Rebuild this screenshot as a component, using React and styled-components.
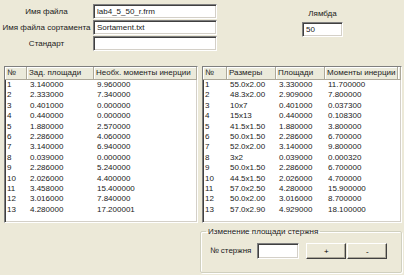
import React from "react";
import styled, { createGlobalStyle } from "styled-components";

const Global = createGlobalStyle`
  html, body { margin: 0; padding: 0; background: #ECE9D8; }
  body { font-family: "Liberation Sans", Arial, sans-serif; font-size: 8px; color: #000; }
`;

const Window = styled.div`
  width: 404px;
  height: 275px;
  background: #ECE9D8;
  overflow: hidden;
  display: flex;
  flex-direction: column;
`;

const Top = styled.div`
  display: flex;
  height: 66px;
  padding-top: 4px;
  box-sizing: border-box;
`;

const FormGrid = styled.div`
  display: grid;
  grid-template-columns: 93px 124px;
  grid-auto-rows: 15px;
  row-gap: 1px;
  align-items: center;
`;

const Label = styled.div`
  text-align: center;
  white-space: nowrap;
  line-height: 15px;
  color: #1a1a1a;
`;

const sunken = `
  box-sizing: border-box;
  background: #fff;
  border-style: solid;
  border-width: 1px;
  border-color: #7F7F7F #FFFFFF #FFFFFF #7F7F7F;
  box-shadow: inset 1px 1px 0 #404040, inset -1px -1px 0 #D4D0C8;
`;

const Input = styled.div`
  ${sunken}
  height: ${(p) => p.$h || 15}px;
  width: ${(p) => (p.$w ? p.$w + "px" : "auto")};
  padding: 0 3px;
  line-height: ${(p) => (p.$h || 15) - 2}px;
  white-space: nowrap;
  overflow: hidden;
  color: #1a1a1a;
`;

const LambdaBlock = styled.div`
  margin-left: 85px;
  display: flex;
  flex-direction: column;
  align-items: center;
  width: 41px;
`;

const LambdaLabel = styled.div`
  line-height: 15px;
  height: 18px;
  padding-top: 2px;
  box-sizing: border-box;
  color: #1a1a1a;
`;

const Lists = styled.div`
  display: flex;
  height: 157px;
  padding-left: 4px;
  gap: 4px;
`;

const List = styled.div`
  ${sunken}
  width: ${(p) => p.$w}px;
  height: 100%;
  overflow: hidden;
`;

const Grid = styled.div`
  display: grid;
  grid-template-columns: ${(p) => p.$cols};
`;

const Head = styled.div`
  height: 12px;
  line-height: 12px;
  padding-left: 2px;
  background: #EBEADB;
  border-right: 1px solid #ACA899;
  border-bottom: 1px solid #ACA899;
  box-shadow: inset 1px 1px 0 #FFFFFF;
  white-space: nowrap;
  overflow: hidden;
  color: #222;
`;

const Cell = styled.div`
  height: 10.4px;
  line-height: 10.4px;
  padding-left: ${(p) => p.$pad ?? 3}px;
  white-space: nowrap;
  color: #1a1a1a;
`;

const Bottom = styled.div`
  display: flex;
  justify-content: flex-end;
  padding: 4px 2px 0 0;
`;

const GroupBox = styled.fieldset`
  box-sizing: border-box;
  margin: 0;
  width: 202px;
  height: 46px;
  padding: 7px 0 0 9px;
  border: 1px solid #D0D0BF;
  box-shadow: 1px 1px 0 #FFFFFF, inset 1px 1px 0 #FFFFFF;
  border-radius: 2px;
  display: flex;
  align-items: flex-start;
`;

const Legend = styled.legend`
  padding: 0 2px;
  margin-left: -4px;
  color: #222;
  line-height: 9px;
`;

const RowLabel = styled.span`
  margin-right: 6px;
  white-space: nowrap;
  line-height: 16px;
  color: #1a1a1a;
`;

const Button = styled.button`
  box-sizing: border-box;
  width: 40px;
  height: 16px;
  margin-left: ${(p) => p.$ml}px;
  background: #ECE9D8;
  font-family: inherit;
  font-size: 8px;
  color: #000;
  padding: 0;
  border-style: solid;
  border-width: 1px;
  border-color: #FFFFFF #404040 #404040 #FFFFFF;
  box-shadow: inset -1px -1px 0 #ACA899;
`;

const leftRows = [
  ["1", "3.140000", "9.960000"],
  ["2", "2.333000", "7.340000"],
  ["3", "0.401000", "0.000000"],
  ["4", "0.440000", "0.000000"],
  ["5", "1.880000", "2.570000"],
  ["6", "2.286000", "4.060000"],
  ["7", "3.140000", "6.940000"],
  ["8", "0.039000", "0.000000"],
  ["9", "2.286000", "5.240000"],
  ["10", "2.026000", "4.400000"],
  ["11", "3.458000", "15.400000"],
  ["12", "3.016000", "7.840000"],
  ["13", "4.280000", "17.200001"],
];

const rightRows = [
  ["1", "55.0x2.00", "3.330000", "11.700000"],
  ["2", "48.3x2.00", "2.909000", "7.800000"],
  ["3", "10x7", "0.401000", "0.037300"],
  ["4", "15x13", "0.440000", "0.108300"],
  ["5", "41.5x1.50", "1.880000", "3.800000"],
  ["6", "50.0x1.50", "2.286000", "6.700000"],
  ["7", "52.0x2.00", "3.140000", "9.800000"],
  ["8", "3x2", "0.039000", "0.000320"],
  ["9", "50.0x1.50", "2.286000", "6.700000"],
  ["10", "44.5x1.50", "2.026000", "4.700000"],
  ["11", "57.0x2.50", "4.280000", "15.900000"],
  ["12", "50.0x2.00", "3.016000", "8.700000"],
  ["13", "57.0x2.90", "4.929000", "18.100000"],
];

function DataList({ width, cols, heads, rows }) {
  return (
    <List $w={width}>
      <Grid $cols={cols}>
        {heads.map((h, i) => (
          <Head key={i}>{h}</Head>
        ))}
        {rows.map((r, ri) =>
          r.map((v, ci) => (
            <Cell key={ri + "-" + ci} $pad={ci === 0 ? 2 : 3}>
              {v}
            </Cell>
          ))
        )}
      </Grid>
    </List>
  );
}

export default function App() {
  return (
    <Window>
      <Global />
      <Top>
        <FormGrid>
          <Label>Имя файла</Label>
          <Input>lab4_5_50_r.frm</Input>
          <Label>Имя файла сортамента</Label>
          <Input>Sortament.txt</Input>
          <Label>Стандарт</Label>
          <Input />
        </FormGrid>
        <LambdaBlock>
          <LambdaLabel>Лямбда</LambdaLabel>
          <Input $w={41}>50</Input>
        </LambdaBlock>
      </Top>
      <Lists>
        <DataList
          width={194}
          cols="22px 67px 1fr"
          heads={["№", "Зад. площади", "Необх. моменты инерции"]}
          rows={leftRows}
        />
        <DataList
          width={200}
          cols="24px 49px 49px 73px 1fr"
          heads={["№", "Размеры", "Площади", "Моменты инерции", ""]}
          rows={rightRows.map((r) => [...r, ""])}
        />
      </Lists>
      <Bottom>
        <GroupBox>
          <Legend>Изменение площади стержня</Legend>
          <RowLabel>№ стержня</RowLabel>
          <Input $w={42} $h={16} />
          <Button $ml={7}>+</Button>
          <Button $ml={1}>-</Button>
        </GroupBox>
      </Bottom>
    </Window>
  );
}
